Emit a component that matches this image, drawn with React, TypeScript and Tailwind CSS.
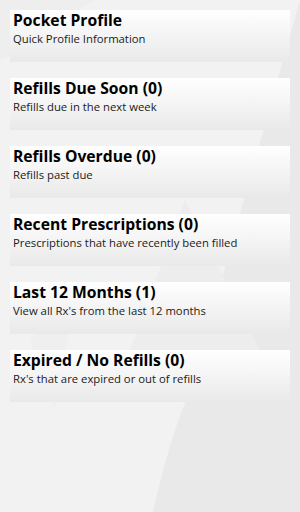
const ITEMS = [
  { title: 'Pocket Profile', sub: 'Quick Profile Information' },
  { title: 'Refills Due Soon (0)', sub: 'Refills due in the next week' },
  { title: 'Refills Overdue (0)', sub: 'Refills past due' },
  { title: 'Recent Prescriptions (0)', sub: 'Prescriptions that have recently been filled' },
  { title: 'Last 12 Months (1)', sub: "View all Rx's from the last 12 months" },
  { title: 'Expired / No Refills (0)', sub: "Rx's that are expired or out of refills" },
]

function Backdrop() {
  return (
    <svg className="absolute inset-0 h-full w-full" viewBox="0 0 300 512" preserveAspectRatio="none">
      <rect width="300" height="512" fill="#f2f2f2" />
      <path d="M300 0 L300 512 L153 512 C165 460 175 425 190 392 L300 0 Z" fill="#e8e9e8" />
      <path d="M0 0 L95 0 C75 10 62 22 55 40 L0 60 Z" fill="#eeeeee" />
      <path d="M55 410 L75 300 L30 340 Z" fill="#efefef" />
      <path d="M185 200 L260 350 L130 350 Z" fill="#ededed" />
    </svg>
  )
}

export default function App() {
  return (
    <div className="relative h-[512px] w-[300px] overflow-hidden" style={{ fontFamily: '"Open Sans", sans-serif' }}>
      <Backdrop />
      <div className="relative flex flex-col gap-4 px-[10px] pt-[10px]">
        {ITEMS.map(it => (
          <div key={it.title} className="h-[52px] bg-gradient-to-b from-white to-[#e9e9e9] pl-[3px] text-black">
            <div className="text-[15.7px] font-bold leading-[21px]">{it.title}</div>
            <div className="text-[11.3px] leading-[15px] text-[#1a1a1a]">{it.sub}</div>
          </div>
        ))}
      </div>
    </div>
  )
}
